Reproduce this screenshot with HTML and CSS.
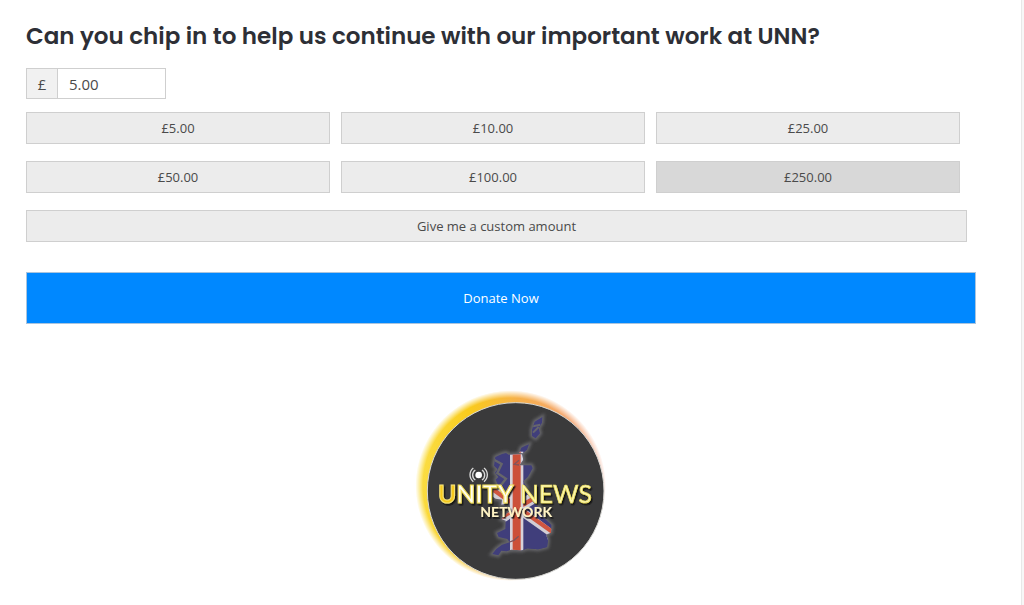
FILE: index.html
```html
<!DOCTYPE html>
<html lang="en">
<head>
    <meta charset="UTF-8">
    <meta name="viewport" content="width=device-width, initial-scale=1.0">
    <title>Donate - Unity News Network</title>
    <link rel="stylesheet" href="styles.css">
</head>
<body>

    <main class="page">
        <form class="donate-form">
            <h1>Can you chip in to help us continue with our important work at UNN?</h1>

            <div class="amount">
                <label class="currency" for="amount">£</label>
                <input class="amount-input" type="text" id="amount" value="5.00">
            </div>

            <div class="levels">
                <button type="button" class="level">£5.00</button>
                <button type="button" class="level">£10.00</button>
                <button type="button" class="level">£25.00</button>
                <button type="button" class="level">£50.00</button>
                <button type="button" class="level">£100.00</button>
                <button type="button" class="level active">£250.00</button>
            </div>

            <button type="button" class="level custom">Give me a custom amount</button>
            <button type="submit" class="donate">Donate Now</button>
        </form>

        <svg class="logo" viewBox="-57 3 660 600" role="img" aria-label="Unity News Network">
            <defs>
                <linearGradient id="ring" x1="0" y1="0.4" x2="1" y2="0.5">
                    <stop offset="0" stop-color="#fbe04a"/>
                    <stop offset="0.25" stop-color="#f9cb1c"/>
                    <stop offset="0.5" stop-color="#f6b04a"/>
                    <stop offset="0.75" stop-color="#f5a870"/>
                    <stop offset="1" stop-color="#f6b8a4"/>
                </linearGradient>
                <radialGradient id="fade">
                    <stop offset="0.92" stop-color="#fff"/>
                    <stop offset="1" stop-color="#fff" stop-opacity="0"/>
                </radialGradient>
                <mask id="ring-mask" maskUnits="userSpaceOnUse" x="0" y="0" width="610" height="610">
                    <circle cx="302" cy="302" r="286" fill="url(#fade)"/>
                </mask>
                <filter id="glow" x="-30%" y="-20%" width="160%" height="140%">
                    <feGaussianBlur stdDeviation="5"/>
                </filter>
                <filter id="shadow" x="-10%" y="-20%" width="120%" height="150%">
                    <feDropShadow dx="4" dy="5" stdDeviation="2" flood-color="#111" flood-opacity="0.9"/>
                </filter>
                <path id="land" d="M397 96L396 113L386 130L390 145L377 160L366 153L366 134L374 110ZM357 178L351 194L338 205L328 204L334 188L346 182ZM276 207L288 204L296 209L336 208L340 224L328 241L364 241L368 250L354 275L340 289L350 308L344 318L362 333L371 354L387 368L400 397L425 421L423 443L408 449L414 465L411 486L384 493L352 490L336 496L304 494L290 499L274 497L265 511L247 507L259 492L276 479L299 472L292 462L266 456L261 444L286 432L287 407L275 403L291 385L303 379L298 354L274 359L276 344L257 341L245 333L252 311L265 303L257 284L265 276L255 263L263 253L252 242L256 216Z"/>
                <clipPath id="land-clip"><use href="#land"/></clipPath>
            </defs>

            <circle cx="302" cy="302" r="286" fill="url(#ring)" mask="url(#ring-mask)"/>
            <circle cx="317" cy="318" r="265" fill="#3a3a3b" stroke="#d8d8d4" stroke-width="3"/>

            <!-- map with the flag inside -->
            <use href="#land" fill="#66666a" stroke="#66666a" stroke-width="12" filter="url(#glow)"/>
            <g clip-path="url(#land-clip)">
                <rect x="230" y="80" width="210" height="450" fill="#403e7b"/>
                <path d="M230 305L440 465M440 295L230 425" stroke="#d1cdd5" stroke-width="34"/>
                <path d="M230 300L440 450M440 300L230 423" stroke="#cf5640" stroke-width="13"/>
                <path d="M336 396L440 470V520H336Z" fill="#403e7b"/>
                <rect x="300" y="200" width="40" height="310" fill="#d7d2d9"/>
                <rect x="308" y="200" width="24" height="310" fill="#cc5039"/>
                <path d="M252 224L275 237L262 264L288 281L270 304L294 326" fill="none" stroke="#66666a" stroke-width="7"/>
                <path d="M299 471L312 466L326 454M328 240L313 238L327 226" fill="none" stroke="#81545b" stroke-width="4"/>
                <path d="M369 124L391 119M369 143L386 126" fill="none" stroke="#66656d" stroke-width="6"/>
            </g>

            <!-- broadcast mark -->
            <g fill="none" stroke="#d9d9d9" stroke-width="4">
                <circle cx="206" cy="270" r="10" fill="#fff" stroke="none"/>
                <path d="M196 255A18 18 0 0 0 196 285M216 255A18 18 0 0 1 216 285M190 249A26 26 0 0 0 190 290M222 249A26 26 0 0 1 222 290"/>
            </g>

            <g filter="url(#shadow)">
                <text class="logo-unity" x="84" y="353"><tspan class="logo-u">U</tspan>NITY</text>
                <text class="logo-news" x="330" y="353">NEWS</text>
                <text class="logo-network" x="211" y="397">NETWORK</text>
            </g>
        </svg>
    </main>

</body>
</html>
```
FILE: styles.css
```css
:root {
    --text-color: #4a4a4a;
    --header-color: #2d2f36;
    --button-bg: #ececec;
    --button-active: #d8d8d8;
    --border-color: #cfcfcf;
    --accent-color: #0088ff;
}

* {
    box-sizing: border-box;
}

body {
    margin: 0;
    background-color: #f7f7f7;
    color: var(--text-color);
    font-family: "Open Sans", "Noto Sans", sans-serif;
}

.page {
    display: flex;
    flex-direction: column;
    gap: 62px;
    min-height: 100vh;
    margin-right: 2px;
    padding: 16px 45px 16px 26px;
    background-color: #fff;
    border-right: 1px solid #e8e8e8;
}

.donate-form {
    display: flex;
    flex-direction: column;
}

h1 {
    margin: 0 0 12px;
    color: var(--header-color);
    font-family: Poppins, Inter, sans-serif;
    font-size: 23px;
    font-weight: 600;
    line-height: 40px;
}

.amount {
    display: flex;
    width: 140px;
    height: 31px;
    margin-bottom: 13px;
    border: 1px solid var(--border-color);
    font-size: 15px;
}

.currency {
    display: flex;
    align-items: center;
    justify-content: center;
    width: 31px;
    background-color: #f1f1f1;
    border-right: 1px solid var(--border-color);
}

.amount-input {
    flex: 1;
    min-width: 0;
    padding: 0 11px;
    border: 0;
    background-color: #fff;
    color: inherit;
    font: inherit;
}

.levels {
    display: grid;
    grid-template-columns: repeat(3, 1fr);
    gap: 17px 11px;
    margin: 0 16px 17px 0;
}

.level {
    height: 32px;
    padding: 0 10px;
    background-color: var(--button-bg);
    border: 1px solid var(--border-color);
    color: var(--text-color);
    font-family: inherit;
    font-size: 13px;
    cursor: pointer;
}

.level.active {
    background-color: var(--button-active);
}

.custom {
    margin: 0 9px 30px 0;
}

.donate {
    height: 52px;
    border: 1px solid #a9c4de;
    background-color: var(--accent-color);
    color: #fff;
    font-family: inherit;
    font-size: 13px;
    cursor: pointer;
}

.logo {
    align-self: center;
    width: 220px;
    height: 200px;
}

.logo-unity {
    fill: #fffef2;
    stroke: #f0dc58;
    stroke-width: 3px;
    font-family: Lato, sans-serif;
    font-size: 74px;
    font-weight: 700;
}

.logo-u {
    fill: #f6c91f;
    stroke: #f5e37a;
}

.logo-news {
    fill: #fbf6b0;
    stroke: #efe05e;
    stroke-width: 2px;
    font-family: Lato, sans-serif;
    font-size: 74px;
    font-weight: 400;
}

.logo-network {
    fill: #fff3c4;
    font-family: Lato, sans-serif;
    font-size: 42px;
    font-weight: 700;
}
```
